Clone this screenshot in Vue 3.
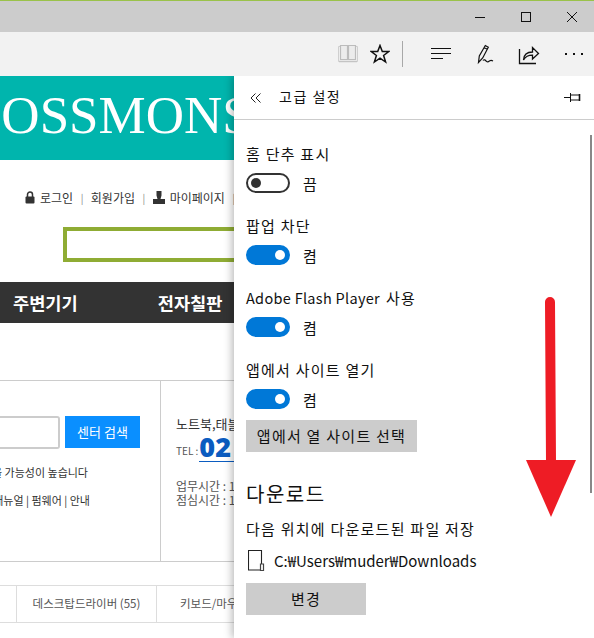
<template>
  <div class="window">
    <div class="titlebar">
      <button class="win-btn" aria-label="minimize">
        <svg width="12" height="12" viewBox="0 0 12 12"><path d="M1 6.500h10" stroke="#111" fill="none" /></svg>
      </button>
      <button class="win-btn" aria-label="maximize">
        <svg width="12" height="12" viewBox="0 0 12 12"><rect x="1.500" y="1.500" width="9" height="9" stroke="#111" fill="none" /></svg>
      </button>
      <button class="win-btn" aria-label="close">
        <svg width="12" height="12" viewBox="0 0 12 12"><path d="M1 1l10 10M11 1L1 11" stroke="#111" fill="none" /></svg>
      </button>
    </div>

    <div class="toolbar">
      <svg class="tool book" width="22" height="20" viewBox="0 0 22 20">
        <path d="M1.500 2.500h19v15h-19z" stroke="#cfcfcf" fill="#f2f2f2" />
        <path d="M3.500 1.500h7v14h-7zM11.500 1.500h7v14h-7z" stroke="#bcbcbc" stroke-width="1.200" fill="#ececec" />
        <path d="M2 17.500h18" stroke="#c4c4c4" stroke-width="1.500" />
      </svg>
      <svg class="tool star" width="20" height="20" viewBox="0 0 20 20">
        <path d="M10 1.500l2.300 6h6.500l-5.200 4 2 6.500-5.600-3.900-5.600 3.900 2-6.500-5.200-4h6.500z" stroke="#111" stroke-width="1.500" fill="none" />
      </svg>
      <div class="tool-sep"></div>
      <svg class="tool hub" width="22" height="20" viewBox="0 0 22 20">
        <path d="M1 4.500h20M1 9.500h20M1 14.500h12" stroke="#111" stroke-width="1.200" fill="none" />
      </svg>
      <svg class="tool pen" width="20" height="22" viewBox="0 0 20 22">
        <path d="M1.500 19.500l.8-6.500 6-10.500 3 1.800-5.600 10.700zM7.200 4.500l3 1.800M6 17.500c1.200-1.500 2.200-.5 3.500.8s2.200.3 3.300-.5 2-.5 3.200.2" stroke="#111" stroke-width="1.200" fill="none" />
      </svg>
      <svg class="tool share" width="22" height="22" viewBox="0 0 22 22">
        <path d="M1.500 6v14.500H18" stroke="#111" stroke-width="1.300" fill="none" />
        <path d="M5.500 17c.3-5.500 4-8 9-8V4.500l6 6-6 5.500v-3.800c-4 0-7 1.300-9 4.800z" stroke="#111" stroke-width="1.300" fill="none" />
      </svg>
      <div class="dots"><i></i><i></i><i></i></div>
    </div>

    <div class="main">
      <div class="page">
        <div class="logo"><span>BOSSMONS</span></div>
        <div class="member">
          <svg width="10" height="13" viewBox="0 0 10 13">
            <path d="M2.500 6V3.500a2.500 2.500 0 0 1 5 0V6" stroke="#333" stroke-width="1.500" fill="none" />
            <rect x="0.500" y="5.500" width="9" height="7" rx="1" fill="#333" />
          </svg>
          <span>로그인</span>
          <span class="m-sep">|</span>
          <span>회원가입</span>
          <span class="m-sep">|</span>
          <svg width="12" height="13" viewBox="0 0 12 13">
            <path d="M3.500 0h5v4.500L7.500 8H12v5H0V8h4.500L3.500 4.500z" fill="#333" />
          </svg>
          <span>마이페이지</span>
          <span class="m-sep">|</span>
        </div>
        <div class="searchbox"></div>
        <div class="nav">
          <span class="nav-a">주변기기</span>
          <span class="nav-b">전자칠판</span>
        </div>

        <div class="center">
          <div class="center-left">
            <div class="center-search">
              <div class="center-input"></div>
              <div class="center-btn">센터 검색</div>
            </div>
            <p class="note">을 가능성이 높습니다</p>
            <p class="note links">매뉴얼 | 펌웨어 | 안내</p>
          </div>
          <div class="center-right">
            <p class="kind">노트북,태블</p>
            <div class="tel"><span class="tel-label">TEL :</span><span class="tel-num">02</span></div>
            <p class="hours">업무시간 : 1<br />점심시간 : 1</p>
          </div>
        </div>

        <div class="cats">
          <div class="cat cat-0"></div>
          <div class="cat cat-1">데스크탑드라이버 (55)</div>
          <div class="cat cat-2">키보드/마우스</div>
        </div>
      </div>

      <div class="panel">
        <div class="panel-head">
          <svg width="12" height="12" viewBox="0 0 12 12">
            <path d="M5.500 1.500L1 6l4.500 4.500M10.500 1.500L6 6l4.500 4.500" stroke="#222" fill="none" />
          </svg>
          <span class="panel-title">고급 설정</span>
          <svg class="pin" width="17" height="9" viewBox="0 0 17 9">
            <path d="M0 4.500h6M6.500 0v9M6.500 2h9M6.500 7h9" stroke="#111" fill="none" />
            <path d="M15.500 1v7" stroke="#111" stroke-width="1.600" fill="none" />
          </svg>
        </div>

        <div class="panel-body">
          <div v-for="opt in options" :key="opt.label" class="option">
            <div class="opt-label"><span v-if="opt.latin" class="latin">{{ opt.latin }}</span>{{ opt.label }}</div>
            <div class="opt-row">
              <div class="toggle" :class="{ on: opt.on }"><i></i></div>
              <span>{{ opt.on ? '켬' : '끔' }}</span>
            </div>
          </div>
          <div class="grey-btn sites">앱에서 열 사이트 선택</div>

          <h2 class="dl-title">다운로드</h2>
          <div class="dl-sub">다음 위치에 다운로드된 파일 저장</div>
          <div class="dl-path">
            <svg width="17" height="21" viewBox="0 0 17 21">
              <path d="M.500.500h13v19.500H.500z" stroke="#222" stroke-width="1.100" fill="none" />
              <path d="M12.500 14h3v6.500h-3z" stroke="#444" stroke-width="1.200" fill="#fff" />
            </svg>
            <span>C:₩Users₩muder₩Downloads</span>
          </div>
          <div class="grey-btn change">변경</div>
        </div>

        <div class="scrollbar"></div>
      </div>
    </div>

    <svg class="arrow" width="50" height="222" viewBox="0 0 50 222">
      <path d="M19 6a5 5 0 0 1 10 0l1 160H20z" fill="#ee1c25" />
      <path d="M0 164h50l-25 57z" fill="#ee1c25" />
    </svg>
  </div>
</template>

<script setup>
const options = [
  { label: "홈 단추 표시", on: false },
  { label: "팝업 차단", on: true },
  { latin: "Adobe Flash Player", label: "사용", on: true },
  { label: "앱에서 사이트 열기", on: true },
];
</script>

<style>
html,
body {
  margin: 0;
  overflow: hidden;
  background: #fff;
}
</style>

<style scoped>
.window {
  position: relative;
  width: 594px;
  height: 638px;
  overflow: hidden;
  display: flex;
  flex-direction: column;
  font-family: "Noto Sans CJK KR", "Open Sans", sans-serif;
  color: #111;
}

p {
  margin: 0;
}

.titlebar {
  height: 31px;
  flex: none;
  background: #ccc;
  border-top: 1px solid #9ac24a;
  display: flex;
  justify-content: flex-end;
  align-items: center;
  margin-right: -1px;
}

.win-btn {
  width: 46px;
  height: 31px;
  padding: 0;
  border: 0;
  background: none;
  display: flex;
  align-items: center;
  justify-content: center;
}

.toolbar {
  height: 44px;
  flex: none;
  background: #f2f2f2;
  display: flex;
  align-items: center;
  padding-left: 337px;
}

.tool {
  flex: none;
}

.star {
  margin-left: 11px;
}

.tool-sep {
  width: 1px;
  height: 26px;
  background: #a8a8a8;
  margin-left: 12px;
}

.hub {
  margin-left: 27px;
}

.pen {
  margin-left: 25px;
}

.share {
  margin-left: 21px;
}

.dots {
  display: flex;
  gap: 6px;
  margin-left: 25px;
}

.dots i {
  width: 2px;
  height: 2px;
  background: #111;
}

.main {
  flex: 1;
  min-height: 0;
  display: flex;
  overflow: hidden;
}

.page {
  width: 234px;
  flex: none;
  overflow: hidden;
  background: #fff;
  color: #333;
}

.logo {
  height: 84px;
  background: #00b5ad;
  color: #fff;
  overflow: hidden;
  display: flex;
  align-items: center;
  white-space: nowrap;
}

.logo span {
  font-family: "Liberation Serif", serif;
  font-size: 53px;
  margin-left: -34px;
  margin-top: -6px;
}

.member {
  height: 22px;
  margin-top: 26px;
  padding-left: 25px;
  display: flex;
  align-items: center;
  font-size: 12px;
  white-space: nowrap;
}

.member svg {
  flex: none;
  margin-right: 5px;
}

.m-sep {
  color: #888;
  margin: 0 7.5px;
  font-size: 10px;
}

.searchbox {
  box-sizing: border-box;
  width: 200px;
  height: 35px;
  margin: 19px 0 0 63px;
  border: 4px solid #8fac34;
  background: #fff;
}

.nav {
  height: 41px;
  margin-top: 20px;
  background: #333;
  color: #fff;
  font-size: 17.6px;
  font-weight: 700;
  display: flex;
  align-items: center;
  white-space: nowrap;
}

.nav-a {
  margin-left: 13px;
}

.nav-b {
  margin-left: 80px;
}

.center {
  height: 180px;
  margin-top: 57px;
  border-top: 1px solid #ccc;
  border-bottom: 1px solid #ccc;
  display: flex;
}

.center-left {
  width: 161px;
  flex: none;
  box-sizing: border-box;
  border-right: 1px solid #ccc;
  padding-top: 35px;
}

.center-search {
  display: flex;
  gap: 5px;
}

.center-input {
  box-sizing: border-box;
  width: 60px;
  height: 33px;
  border: 2px solid #ccc;
  border-left: 0;
  border-radius: 0 3px 3px 0;
}

.center-btn {
  width: 75px;
  height: 32px;
  background: #0a8fff;
  color: #fff;
  font-size: 13px;
  line-height: 32px;
  text-align: center;
}

.note {
  font-size: 11px;
  line-height: 16px;
  margin-top: 15px;
  white-space: nowrap;
  direction: rtl;
  width: 88px;
}

.links {
  margin-top: 12px;
  width: 90px;
}

.center-right {
  padding: 34px 0 0 15px;
  white-space: nowrap;
  min-width: 0;
  overflow: hidden;
}

.kind {
  font-size: 13px;
  line-height: 18px;
}

.tel {
  display: flex;
  align-items: flex-end;
  height: 28px;
  margin-top: 1px;
}

.tel-label {
  font-size: 10px;
  line-height: 14px;
  margin: 0 1px 4px 0;
  color: #555;
}

.tel-num {
  font-family: "Open Sans", sans-serif;
  font-size: 27px;
  line-height: 28px;
  font-weight: 800;
  color: #0b5cc0;
  border-bottom: 1px solid #0b5cc0;
  padding-right: 4px;
}

.hours {
  font-size: 12px;
  line-height: 14px;
  margin-top: 17px;
  color: #555;
}

.cats {
  height: 36px;
  margin-top: 23px;
  border-top: 1px solid #ddd;
  border-bottom: 1px solid #ddd;
  display: flex;
  font-size: 11.5px;
  line-height: 35px;
  white-space: nowrap;
  color: #555;
}

.cat {
  flex: none;
  box-sizing: border-box;
  border-right: 1px solid #ddd;
  text-align: center;
}

.cat-0 {
  width: 17px;
}

.cat-1 {
  width: 140px;
}

.cat-2 {
  width: 114px;
  border-right: 0;
}

.panel {
  position: relative;
  flex: 1;
  background: #fff;
  box-shadow: -2px 0 8px rgba(0, 0, 0, 0.28);
}

.panel-head {
  box-sizing: border-box;
  height: 44px;
  border-bottom: 1px solid #ccc;
  display: flex;
  align-items: center;
  padding: 0 13px 0 16px;
  font-size: 14px;
  letter-spacing: 1.5px;
}

.panel-title {
  margin-left: 17px;
  margin-top: -3px;
}

.pin {
  margin-left: auto;
  margin-top: -1px;
}

.panel-body {
  padding: 0 0 0 12px;
  font-size: 15px;
  letter-spacing: 1.250px;
}

.option {
  height: 72px;
}

.option:first-child {
  padding-top: 22px;
}

.opt-label {
  height: 24px;
  line-height: 23px;
  white-space: nowrap;
}

.latin {
  font-size: 14.5px;
  letter-spacing: 0.3px;
  margin-right: 6px;
}

.opt-row {
  display: flex;
  align-items: center;
  gap: 13px;
  height: 24px;
  margin-top: 5px;
}

.toggle {
  box-sizing: border-box;
  width: 44px;
  height: 20px;
  border: 2px solid #333;
  border-radius: 10px;
  display: flex;
  align-items: center;
  padding: 0 3px;
}

.toggle i {
  width: 10px;
  height: 10px;
  border-radius: 50%;
  background: #333;
}

.toggle.on {
  background: #0078d7;
  border-color: #0078d7;
  justify-content: flex-end;
}

.toggle.on i {
  background: #fff;
}

.grey-btn {
  background: #ccc;
  height: 32px;
  line-height: 32px;
  text-align: center;
}

.sites {
  width: 171px;
  margin-top: -10px;
}

.dl-title {
  margin: 27px 0 0;
  font-size: 20px;
  line-height: 30px;
  font-weight: 400;
  letter-spacing: 1.5px;
}

.dl-sub {
  margin-top: 9px;
  line-height: 22px;
}

.dl-path {
  display: flex;
  align-items: center;
  gap: 9px;
  margin-top: 8px;
  height: 24px;
  white-space: nowrap;
  letter-spacing: 0;
}

.dl-path svg {
  flex: none;
  margin-left: 2px;
}

.change {
  width: 120px;
  margin-top: 11px;
}

.scrollbar {
  position: absolute;
  left: 356px;
  top: 59px;
  width: 2px;
  height: 358px;
  background: #888;
}

.arrow {
  position: absolute;
  left: 526px;
  top: 296px;
}
</style>
